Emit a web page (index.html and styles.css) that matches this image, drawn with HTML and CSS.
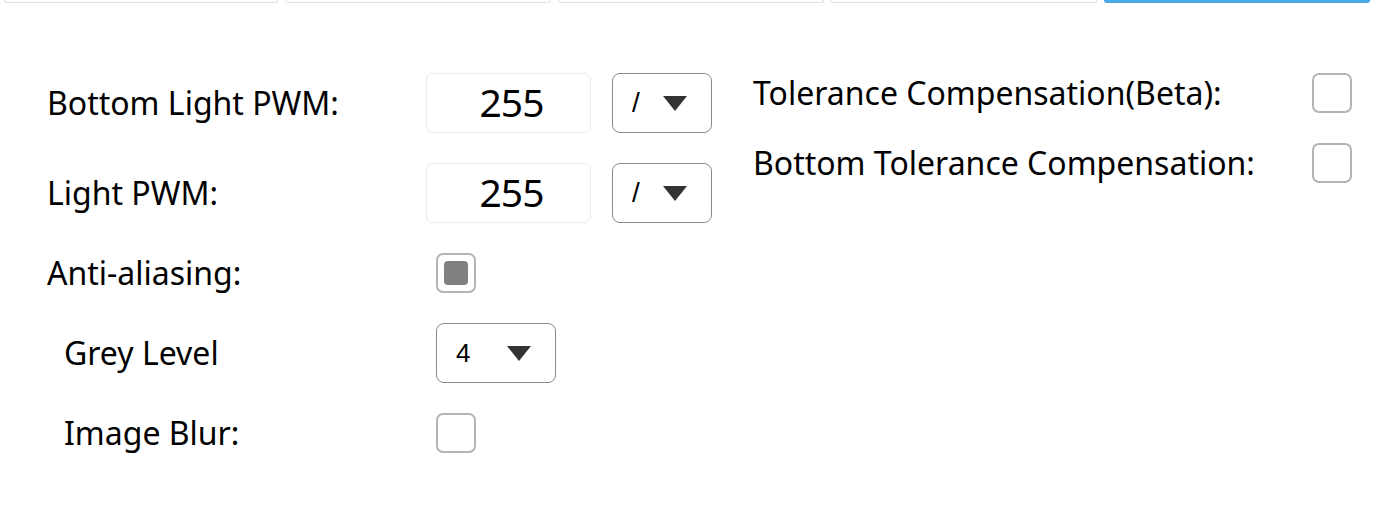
FILE: index.html
```html
<!DOCTYPE html>
<html>
<head>
<meta charset="utf-8">
<link rel="stylesheet" href="styles.css">
</head>
<body>
<div class="tabs">
  <div class="tab tab-first"></div>
  <div class="tab"></div>
  <div class="tab"></div>
  <div class="tab"></div>
  <div class="tab tab-active"></div>
</div>
<div class="panel">
  <div class="left">
    <div class="label">Bottom Light PWM:</div>
    <div class="controls">
      <div class="num"><span class="digits">255</span></div>
      <div class="select select-small"><span class="slash">/</span><span class="tri"></span></div>
    </div>
    <div class="label">Light PWM:</div>
    <div class="controls">
      <div class="num"><span class="digits">255</span></div>
      <div class="select select-small"><span class="slash">/</span><span class="tri"></span></div>
    </div>
    <div class="label">Anti-aliasing:</div>
    <div class="controls"><div class="check checked"><span class="mark"></span></div></div>
    <div class="label sub">Grey Level</div>
    <div class="controls"><div class="select select-grey"><span>4</span><span class="tri"></span></div></div>
    <div class="label sub">Image Blur:</div>
    <div class="controls"><div class="check"></div></div>
  </div>
  <div class="right">
    <div class="label">Tolerance Compensation(Beta):</div>
    <div class="check"></div>
    <div class="label">Bottom Tolerance Compensation:</div>
    <div class="check"></div>
  </div>
</div>
</body>
</html>
```

FILE: styles.css
```css
html, body {
  margin: 0;
  padding: 0;
  background: #ffffff;
}
body {
  font-family: "Noto Sans", "Open Sans", sans-serif;
  color: #000;
  width: 1381px;
  height: 511px;
  overflow: hidden;
}
.tabs {
  display: flex;
  gap: 7px;
  padding: 0 11px 0 4px;
}
.tab {
  flex: 1;
  height: 2px;
  border: 1px solid #dedeea;
  border-top: none;
  border-radius: 0 0 6px 6px;
}
.tab-first {
  flex: 0 0 272px;
}
.tab-active {
  background: #4aa8e8;
  border-color: #4aa8e8;
  height: 2px;
}
.panel {
  display: flex;
  padding: 70px 0 0 47px;
}
.left {
  display: grid;
  grid-template-columns: 379px auto;
  row-gap: 30px;
  align-items: center;
  width: 706px;
}
.right {
  display: grid;
  grid-template-columns: 559px 40px;
  row-gap: 30px;
  align-items: center;
  align-content: start;
}
.label {
  font-size: 32px;
  line-height: 40px;
  white-space: nowrap;
}
.label.sub {
  padding-left: 17px;
}
.controls {
  display: flex;
  gap: 21px;
  align-items: center;
}
.num {
  width: 163px;
  height: 58px;
  border: 1px solid #ebebeb;
  border-radius: 6px;
  display: flex;
  align-items: center;
  justify-content: center;
}
.digits {
  font-size: 39px;
  line-height: 1;
  letter-spacing: -1px;
  padding: 0 0 4px 6px;
}
.select {
  border: 1px solid #8a8a8a;
  border-radius: 8px;
  display: flex;
  align-items: center;
  font-family: "Liberation Sans", Arial, sans-serif;
  font-size: 26px;
  box-sizing: border-box;
  height: 60px;
}
.select-small {
  width: 100px;
  padding-left: 19px;
  gap: 23px;
}
.slash {
  font-size: 28px;
  font-weight: bold;
  font-weight: 500;
}
.select-grey {
  width: 120px;
  padding-left: 19px;
  gap: 37px;
  margin-left: 10px;
}
.tri {
  width: 0;
  height: 0;
  border-left: 12px solid transparent;
  border-right: 12px solid transparent;
  border-top: 15px solid #333;
}
.check {
  width: 40px;
  height: 40px;
  box-sizing: border-box;
  border: 2px solid #b4b4b4;
  border-radius: 7px;
  display: flex;
  align-items: center;
  justify-content: center;
}
.controls .check {
  margin-left: 10px;
}
.mark {
  width: 24px;
  height: 24px;
  background: #808080;
  border-radius: 4px;
}
```
